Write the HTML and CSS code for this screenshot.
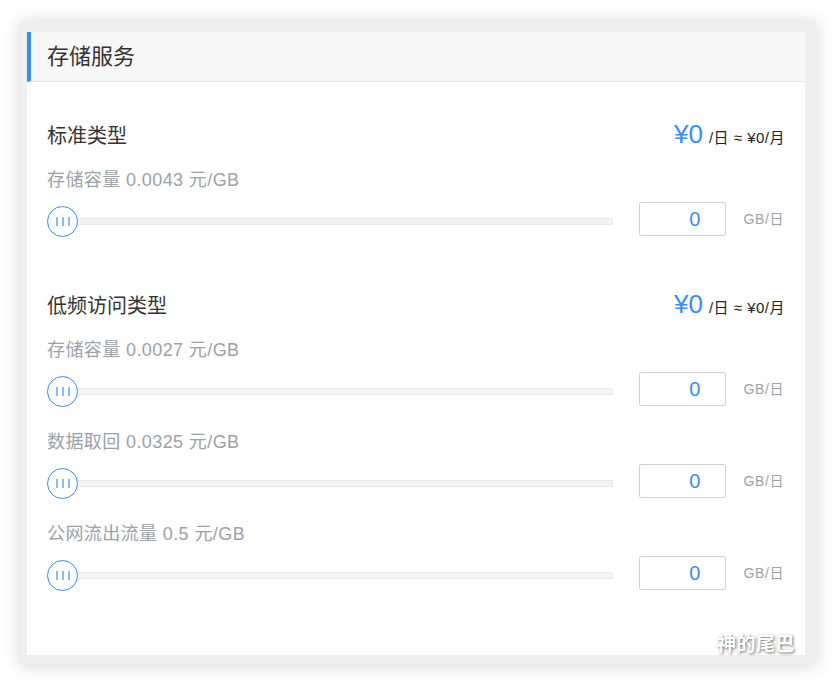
FILE: index.html
```html
<!doctype html>
<html>
 <head>
	<meta charset="UTF-8">
	<meta name="viewport" content="width=device-width, initial-scale=1.0">
	<title> 存储服务 </title>
	<link rel="stylesheet" href="styles.css">
 </head>
<body>

	<div class="frame">
		<div class="panel">
			<div class="panel-head">存储服务</div>

			<div class="panel-body">

				<div class="section">
					<div class="section-head">
						<span class="section-title">标准类型</span>
						<span class="price"><span class="price-big">¥0</span><span class="price-unit">/日 ≈ ¥0/月</span></span>
					</div>
					<div class="item">
						<div class="item-label">存储容量 0.0043 元/GB</div>
						<div class="slider-row">
							<div class="slider">
								<div class="track"></div>
								<div class="handle"><span></span><span></span><span></span></div>
							</div>
							<input class="amount" type="text" value="0">
							<span class="unit">GB/日</span>
						</div>
					</div>
				</div>

				<div class="section">
					<div class="section-head">
						<span class="section-title">低频访问类型</span>
						<span class="price"><span class="price-big">¥0</span><span class="price-unit">/日 ≈ ¥0/月</span></span>
					</div>
					<div class="item">
						<div class="item-label">存储容量 0.0027 元/GB</div>
						<div class="slider-row">
							<div class="slider">
								<div class="track"></div>
								<div class="handle"><span></span><span></span><span></span></div>
							</div>
							<input class="amount" type="text" value="0">
							<span class="unit">GB/日</span>
						</div>
					</div>
					<div class="item">
						<div class="item-label">数据取回 0.0325 元/GB</div>
						<div class="slider-row">
							<div class="slider">
								<div class="track"></div>
								<div class="handle"><span></span><span></span><span></span></div>
							</div>
							<input class="amount" type="text" value="0">
							<span class="unit">GB/日</span>
						</div>
					</div>
					<div class="item">
						<div class="item-label">公网流出流量 0.5 元/GB</div>
						<div class="slider-row">
							<div class="slider">
								<div class="track"></div>
								<div class="handle"><span></span><span></span><span></span></div>
							</div>
							<input class="amount" type="text" value="0">
							<span class="unit">GB/日</span>
						</div>
					</div>
				</div>

			</div>
		</div>
		<div class="watermark">神的尾巴</div>
	</div>

</body>
</html>
```

FILE: styles.css
```css
* {
	box-sizing: border-box;
}

body {
	margin: 0;
	padding: 20px;
	background-color: #fff;
	font-family: "Liberation Sans", "Noto Sans CJK SC", sans-serif;
	color: #333;
}

.frame {
	position: relative;
	width: 796px;
	height: 644px;
	padding: 12px 11px 9px 7px;
	background-color: #efefef;
	box-shadow: 0 2px 16px rgba(0, 0, 0, 0.16);
}

.panel {
	height: 100%;
	background-color: #fff;
}

.panel-head {
	height: 50px;
	line-height: 49px;
	padding-left: 16px;
	border-left: 4px solid #388ef5;
	border-bottom: 1px solid #e4e4e4;
	background-color: #f7f7f7;
	font-size: 22px;
	color: #333;
}

.panel-body {
	padding: 36px 20px 0;
}

.section + .section {
	margin-top: 52px;
}

.section-head {
	display: flex;
	justify-content: space-between;
	align-items: baseline;
	height: 32px;
	line-height: 32px;
}

.section-title {
	font-size: 20px;
	color: #333;
}

.price-big {
	font-size: 26px;
	color: #388ef5;
}

.price-unit {
	margin-left: 6px;
	font-size: 15px;
	letter-spacing: 0.5px;
	color: #222;
}

.item-label {
	margin-top: 25px;
	line-height: 22px;
	font-size: 18px;
	letter-spacing: 0.4px;
	color: #9ba1a9;
}

.section-head + .item .item-label {
	margin-top: 19px;
}

.slider-row {
	display: flex;
	align-items: flex-start;
	margin-top: 11px;
	height: 34px;
}

.slider {
	position: relative;
	flex: 1;
	display: flex;
	align-items: center;
	height: 31px;
	margin-top: 4px;
	margin-right: 26px;
}

.track {
	width: 100%;
	height: 7px;
	background-color: #f4f4f4;
	border: 1px solid #e8e8e8;
	border-radius: 1px;
}

.handle {
	position: absolute;
	left: 0;
	top: 0;
	width: 31px;
	height: 31px;
	display: flex;
	justify-content: center;
	align-items: center;
	gap: 4px;
	background-color: #fff;
	border: 1px solid #388ef5;
	border-radius: 50%;
}

.handle span {
	width: 2px;
	height: 9px;
	background-color: #8dbaf6;
}

.amount {
	width: 87px;
	height: 34px;
	margin: 0;
	padding: 0 25px 0 0;
	border: 1px solid #d2d2d2;
	border-radius: 2px;
	background-color: #fff;
	text-align: right;
	font-family: "Liberation Sans", sans-serif;
	font-size: 20px;
	color: #388ef5;
	outline: none;
}

.unit {
	margin-left: 17px;
	margin-right: 1px;
	line-height: 34px;
	font-size: 14px;
	letter-spacing: 0.6px;
	color: #9ba1a9;
}

.watermark {
	position: absolute;
	right: 21px;
	bottom: 9px;
	line-height: 20px;
	font-size: 19px;
	font-weight: bold;
	color: #fff;
	letter-spacing: 0.5px;
	text-shadow: 1px 1px 3px rgba(0, 0, 0, 0.6);
}
```
